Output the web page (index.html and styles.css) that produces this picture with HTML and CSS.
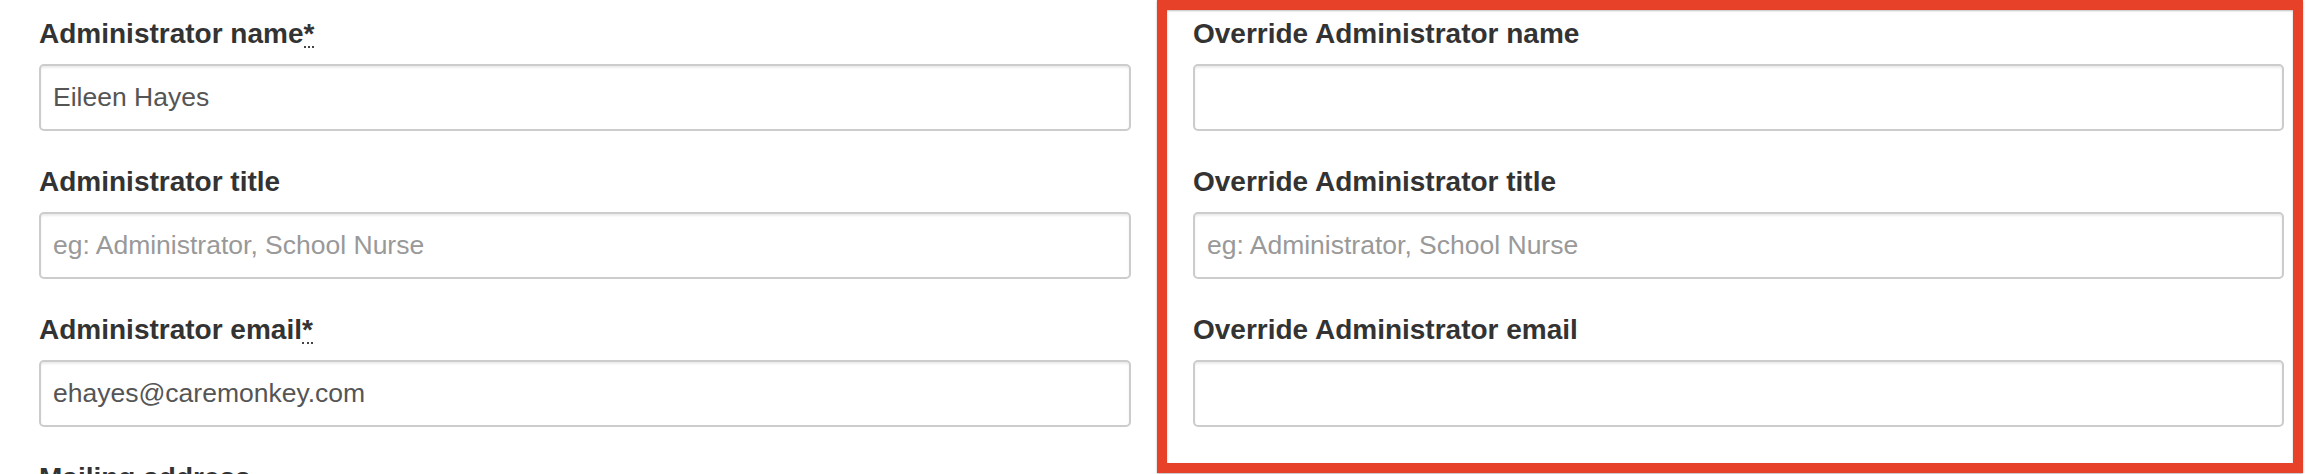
FILE: index.html
```html
<!DOCTYPE html>
<html lang="en">
<head>
<meta charset="utf-8">
<title>Administrator settings</title>
<link rel="stylesheet" href="styles.css">
</head>
<body>
<div class="page">
  <form class="form-row">
    <div class="col">
      <div class="group">
        <label class="lbl">Administrator name<abbr class="req" title="required">*</abbr></label>
        <input class="field" type="text" value="Eileen Hayes">
      </div>
      <div class="group">
        <label class="lbl">Administrator title</label>
        <input class="field" type="text" placeholder="eg: Administrator, School Nurse">
      </div>
      <div class="group">
        <label class="lbl">Administrator email<abbr class="req" title="required">*</abbr></label>
        <input class="field" type="text" value="ehayes@caremonkey.com">
      </div>
      <div class="group">
        <label class="lbl">Mailing address</label>
      </div>
    </div>
    <div class="col col-right">
      <div class="group">
        <label class="lbl">Override Administrator name</label>
        <input class="field" type="text">
      </div>
      <div class="group">
        <label class="lbl">Override Administrator title</label>
        <input class="field" type="text" placeholder="eg: Administrator, School Nurse">
      </div>
      <div class="group">
        <label class="lbl">Override Administrator email</label>
        <input class="field" type="text">
      </div>
    </div>
  </form>
  <div class="annotation"></div>
</div>
</body>
</html>
```

FILE: styles.css
```css
html, body {
  margin: 0;
  padding: 0;
  background: #ffffff;
  height: 474px;
  overflow: hidden;
}

.page {
  position: relative;
  height: 474px;
  font-family: "Liberation Sans", Arial, sans-serif;
  color: #333333;
}

.form-row {
  display: flex;
  gap: 62px;
  padding: 14px 0 0 39px;
  margin: 0;
}

.col {
  width: 1092px;
  flex: 0 0 1092px;
}

.col-right {
  width: 1091px;
  flex: 0 0 1091px;
}

.group {
  margin-bottom: 31px;
}

.lbl {
  display: block;
  font-size: 28px;
  font-weight: bold;
  line-height: 40px;
  margin-bottom: 10px;
  color: #333333;
  white-space: nowrap;
}

.req {
  display: inline-block;
  line-height: 0.9;
  text-decoration: none;
  border-bottom: 2px dotted #444444;
  cursor: help;
}

.field {
  display: block;
  box-sizing: border-box;
  width: 100%;
  height: 67px;
  margin: 0;
  padding: 0 12px;
  font-family: "Liberation Sans", Arial, sans-serif;
  font-size: 26.5px;
  color: #555555;
  background: #ffffff;
  border: 2px solid #cccccc;
  border-radius: 5px;
  box-shadow: inset 0 2px 2px rgba(0, 0, 0, 0.075);
  outline: none;
}

.field::placeholder {
  color: #999999;
  opacity: 1;
}

.annotation {
  position: absolute;
  left: 1157px;
  top: 0;
  width: 1146px;
  height: 473px;
  box-sizing: border-box;
  border: 10px solid #e8412a;
  box-shadow: 0 1px 2px rgba(0, 0, 0, 0.3), inset 0 1px 2px rgba(0, 0, 0, 0.25);
  pointer-events: none;
}
```
